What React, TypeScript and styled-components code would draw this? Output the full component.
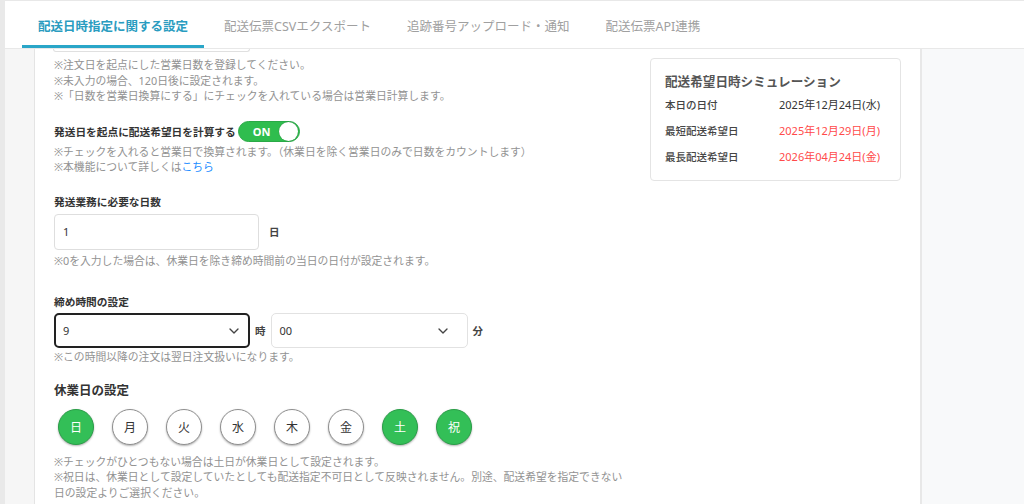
import React from "react";
import styled, { createGlobalStyle } from "styled-components";
import { ChevronDown } from "lucide-react";

const GlobalStyle = createGlobalStyle`
  html, body {
    margin: 0;
    padding: 0;
  }
  body {
    font-family: "Noto Sans", "Noto Sans CJK JP", sans-serif;
    color: #333;
    background: #fff;
    overflow: hidden;
  }
  * {
    box-sizing: border-box;
  }
`;

const Page = styled.div`
  display: flex;
  height: 504px;
  overflow: hidden;
`;

const EdgeStrip = styled.div`
  width: 5px;
  flex-shrink: 0;
  background: #e9e9e9;
`;

const Shell = styled.div`
  flex: 1;
  min-width: 0;
  display: flex;
  flex-direction: column;
`;

const Header = styled.header`
  height: 49px;
  flex-shrink: 0;
  display: flex;
  gap: 4px;
  padding-left: 17px;
  border-top: 1px solid #e8e8e8;
  border-bottom: 1px solid #e8e8e8;
  background: #fff;
`;

const Tab = styled.div<{ $active?: boolean }>`
  display: flex;
  align-items: center;
  padding: 4px 16px 0;
  font-size: 12.5px;
  font-weight: ${(p) => (p.$active ? 700 : 400)};
  color: ${(p) => (p.$active ? "#2a9cc0" : "#a0a0a0")};
  border-bottom: 3px solid ${(p) => (p.$active ? "#2aa6c8" : "transparent")};
  white-space: nowrap;
`;

const Body = styled.div`
  flex: 1;
  display: grid;
  grid-template-columns: 30px 885px 1fr;
  min-height: 0;
`;

const Gutter = styled.div`
  background: #f6f6f6;
  border-right: 1px solid #e4e4e4;
`;

const Main = styled.main`
  display: grid;
  grid-template-columns: 1fr 251px;
  column-gap: 10px;
  padding: 0 19px;
  align-items: start;
`;

const SidePanel = styled.aside`
  background: #f8f9fa;
  border-left: 2px solid #e8e8e8;
`;

const Form = styled.div`
  display: flex;
  flex-direction: column;
  align-items: flex-start;
`;

const FieldStub = styled.div`
  width: 197px;
  height: 3px;
  margin-left: -1px;
  border: 1px solid #e0e0e0;
  border-top: none;
  border-radius: 0 0 4px 4px;
`;

const Note = styled.p<{ $mt?: number }>`
  margin: ${(p) => p.$mt ?? 0}px 0 0;
  font-size: 10.8px;
  line-height: 15.5px;
  color: #929292;
  white-space: nowrap;
`;

const Link = styled.a`
  color: #1a8cff;
  text-decoration: none;
`;

const Label = styled.div<{ $mt?: number }>`
  margin-top: ${(p) => p.$mt ?? 0}px;
  font-size: 10.7px;
  line-height: 16px;
  font-weight: 700;
  color: #333;
`;

const Heading = styled.div<{ $mt?: number }>`
  margin-top: ${(p) => p.$mt ?? 0}px;
  font-size: 12.5px;
  line-height: 18px;
  font-weight: 700;
  color: #333;
`;

const ToggleRow = styled.div`
  margin-top: 17px;
  display: flex;
  align-items: center;
  gap: 2px;
  height: 22px;
`;

const Toggle = styled.div`
  width: 62px;
  height: 21px;
  border-radius: 11px;
  background: #2fbd4e;
  border: 1px solid #2aa947;
  display: flex;
  align-items: center;
  justify-content: space-between;
  padding: 0 1px 0 14px;
  color: #fff;
  font-size: 11px;
  font-weight: 700;
`;

const Knob = styled.span`
  width: 19px;
  height: 19px;
  border-radius: 50%;
  background: #fff;
  box-shadow: 0 0 1px rgba(0, 0, 0, 0.4);
`;

const InputRow = styled.div<{ $mt?: number }>`
  margin-top: ${(p) => p.$mt ?? 0}px;
  display: flex;
  align-items: center;
  gap: 5px;
`;

const TextBox = styled.div`
  width: 205px;
  height: 36px;
  border: 1px solid #dedede;
  border-radius: 4px;
  display: flex;
  align-items: center;
  padding-left: 8px;
  font-size: 11px;
  color: #333;
`;

const Unit = styled.span<{ $ml?: number }>`
  margin-left: ${(p) => p.$ml ?? 0}px;
  font-size: 10.5px;
  font-weight: 700;
  color: #444;
`;

const SelectBox = styled.div<{ $focused?: boolean }>`
  width: ${(p) => (p.$focused ? 196 : 197)}px;
  height: 35px;
  border: ${(p) => (p.$focused ? "2px solid #222" : "1px solid #e2e2e2")};
  border-radius: 5px;
  display: flex;
  align-items: center;
  justify-content: space-between;
  padding: 0 ${(p) => (p.$focused ? 6 : 16)}px 0 ${(p) => (p.$focused ? 7 : 8)}px;
  font-size: 11px;
  color: #333;
`;

const DayRow = styled.div`
  margin-top: 9px;
  padding-left: 4px;
  display: flex;
  gap: 18px;
`;

const DayCircle = styled.div<{ $on?: boolean }>`
  width: 36px;
  height: 36px;
  border-radius: 50%;
  display: flex;
  align-items: center;
  justify-content: center;
  font-size: 12px;
  background: ${(p) => (p.$on ? "#33bf57" : "#fff")};
  color: ${(p) => (p.$on ? "#fff" : "#333")};
  border: 1px solid ${(p) => (p.$on ? "#2a9d48" : "#8f8f8f")};
  box-shadow: 0 1px 2px rgba(0, 0, 0, 0.3);
`;

const Card = styled.section`
  margin-top: 9px;
  border: 1px solid #e4e4e4;
  border-radius: 4px;
  padding: 14px 14px 10px;
`;

const CardTitle = styled.div`
  font-size: 12.6px;
  line-height: 18px;
  font-weight: 700;
  color: #555;
  margin-bottom: 1px;
`;

const SimRow = styled.div`
  display: grid;
  grid-template-columns: 114px 1fr;
  line-height: 26px;
  font-size: 10.5px;
`;

const SimLabel = styled.span`
  color: #444;
  font-weight: 500;
`;

const SimValue = styled.span<{ $alert?: boolean }>`
  font-size: 11px;
  color: ${(p) => (p.$alert ? "#ff4a4a" : "#333")};
`;

const days = [
  { d: "日", on: true },
  { d: "月", on: false },
  { d: "火", on: false },
  { d: "水", on: false },
  { d: "木", on: false },
  { d: "金", on: false },
  { d: "土", on: true },
  { d: "祝", on: true },
];

const sim = [
  { label: "本日の日付", value: "2025年12月24日(水)", alert: false },
  { label: "最短配送希望日", value: "2025年12月29日(月)", alert: true },
  { label: "最長配送希望日", value: "2026年04月24日(金)", alert: true },
];

export default function App() {
  return (
    <>
      <GlobalStyle />
      <Page>
        <EdgeStrip />
        <Shell>
          <Header>
            <Tab $active>配送日時指定に関する設定</Tab>
            <Tab>配送伝票CSVエクスポート</Tab>
            <Tab>追跡番号アップロード・通知</Tab>
            <Tab>配送伝票API連携</Tab>
          </Header>
          <Body>
            <Gutter />
            <Main>
              <Form>
                <FieldStub />
                <Note $mt={5}>
                  ※注文日を起点にした営業日数を登録してください。
                  <br />
                  ※未入力の場合、120日後に設定されます。
                  <br />
                  ※「日数を営業日換算にする」にチェックを入れている場合は営業日計算します。
                </Note>

                <ToggleRow>
                  <Label>発送日を起点に配送希望日を計算する</Label>
                  <Toggle>
                    ON
                    <Knob />
                  </Toggle>
                </ToggleRow>
                <Note $mt={1}>
                  ※チェックを入れると営業日で換算されます。（休業日を除く営業日のみで日数をカウントします）
                  <br />
                  ※本機能について詳しくは<Link href="#">こちら</Link>
                </Note>

                <Label $mt={19}>発送業務に必要な日数</Label>
                <InputRow $mt={4}>
                  <TextBox>1</TextBox>
                  <Unit $ml={5}>日</Unit>
                </InputRow>
                <Note $mt={3}>※0を入力した場合は、休業日を除き締め時間前の当日の日付が設定されます。</Note>

                <Label $mt={26}>締め時間の設定</Label>
                <InputRow $mt={3}>
                  <SelectBox $focused>
                    9
                    <ChevronDown size={16} strokeWidth={2} color="#444" />
                  </SelectBox>
                  <Unit>時</Unit>
                  <SelectBox>
                    00
                    <ChevronDown size={16} strokeWidth={2} color="#444" />
                  </SelectBox>
                  <Unit>分</Unit>
                </InputRow>
                <Note $mt={1}>※この時間以降の注文は翌日注文扱いになります。</Note>

                <Heading $mt={17}>休業日の設定</Heading>
                <DayRow>
                  {days.map((x) => (
                    <DayCircle key={x.d} $on={x.on}>
                      {x.d}
                    </DayCircle>
                  ))}
                </DayRow>
                <Note $mt={9}>
                  ※チェックがひとつもない場合は土日が休業日として設定されます。
                  <br />
                  ※祝日は、休業日として設定していたとしても配送指定不可日として反映されません。別途、配送希望を指定できない
                  <br />
                  日の設定よりご選択ください。
                </Note>
              </Form>

              <Card>
                <CardTitle>配送希望日時シミュレーション</CardTitle>
                {sim.map((r) => (
                  <SimRow key={r.label}>
                    <SimLabel>{r.label}</SimLabel>
                    <SimValue $alert={r.alert}>{r.value}</SimValue>
                  </SimRow>
                ))}
              </Card>
            </Main>
            <SidePanel />
          </Body>
        </Shell>
      </Page>
    </>
  );
}
